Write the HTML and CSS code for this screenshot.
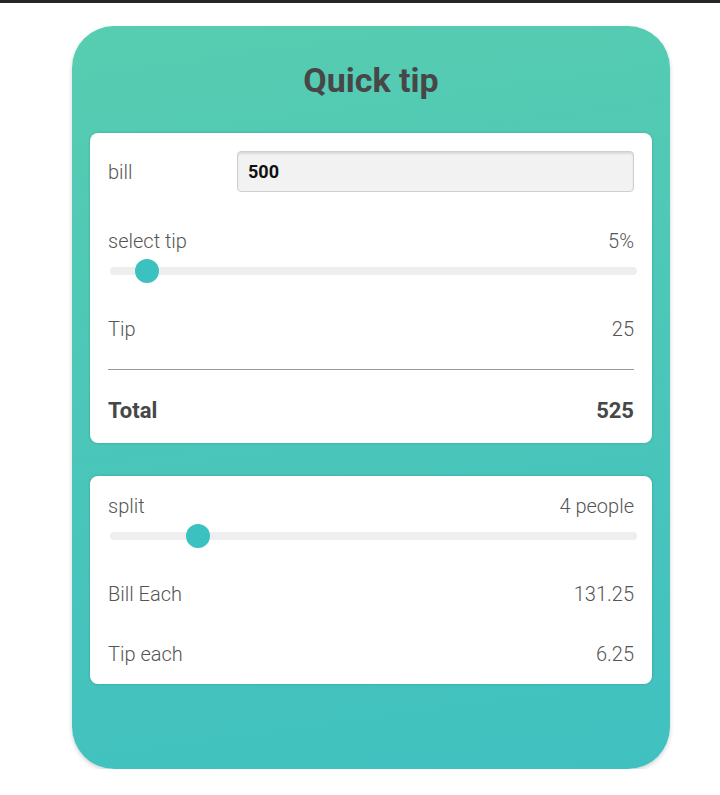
FILE: index.html
```html
<!DOCTYPE html>
<html>
<head>
<meta charset="utf-8">
<link rel="stylesheet" href="styles.css">
</head>
<body>
<div class="topbar"></div>
<main class="app">
  <h1 class="title">Quick tip</h1>
  <section class="panel panel-bill">
    <div class="bill-row">
      <label class="label bill-label">bill</label>
      <div class="bill-input">500</div>
    </div>
    <div class="row head-row">
      <span class="label">select tip</span>
      <span class="value">5%</span>
    </div>
    <div class="slider"><div class="thumb" style="left:25px"></div></div>
    <div class="row tip-row">
      <span class="label">Tip</span>
      <span class="value">25</span>
    </div>
    <hr class="divider">
    <div class="row total-row">
      <span>Total</span>
      <span>525</span>
    </div>
  </section>
  <section class="panel panel-split">
    <div class="row head-row split-head">
      <span class="label">split</span>
      <span class="value">4 people</span>
    </div>
    <div class="slider"><div class="thumb" style="left:76px"></div></div>
    <div class="row each-row">
      <span class="label">Bill Each</span>
      <span class="value">131.25</span>
    </div>
    <div class="row each-row each-row-2">
      <span class="label">Tip each</span>
      <span class="value">6.25</span>
    </div>
  </section>
</main>
</body>
</html>
```
FILE: styles.css
```css
html, body {
  margin: 0;
  padding: 0;
  background: #ffffff;
  font-family: Roboto, "Liberation Sans", sans-serif;
}
.topbar {
  height: 3px;
  background: #262626;
}
.app {
  box-sizing: border-box;
  width: 598px;
  height: 743px;
  margin: 23px 0 0 72px;
  padding: 0 18px;
  border-radius: 42px;
  background: linear-gradient(172deg, #57cdb0 0%, #4bc6b9 50%, #40c1c0 100%);
  box-shadow: 0 2px 4px rgba(0, 0, 0, 0.18);
  overflow: hidden;
}
.title {
  margin: 0;
  padding-top: 34px;
  height: 107px;
  box-sizing: border-box;
  text-align: center;
  font-size: 34px;
  line-height: 40px;
  font-weight: 700;
  color: #474747;
}
.panel {
  background: #ffffff;
  border-radius: 8px;
  padding: 18px 18px 20px;
  box-shadow: 0 0 3px rgba(0, 0, 0, 0.18);
  color: #555555;
}
.panel-split {
  margin-top: 33px;
  padding-top: 19px;
  padding-bottom: 19px;
}
.label, .value {
  font-size: 20px;
  font-weight: 300;
  color: #555555;
}
.bill-row {
  display: flex;
  align-items: center;
  height: 41px;
}
.bill-label {
  width: 129px;
  flex: none;
}
.bill-input {
  box-sizing: border-box;
  flex: 1;
  height: 41px;
  background: #f2f2f2;
  border: 1px solid #cfcfcf;
  border-radius: 4px;
  box-shadow: inset 0 2px 2px rgba(0, 0, 0, 0.1);
  padding: 0 10px;
  display: flex;
  align-items: center;
  font-size: 18px;
  font-weight: 700;
  color: #111111;
}
.row {
  display: flex;
  justify-content: space-between;
  align-items: center;
  height: 22px;
  line-height: 22px;
}
.head-row {
  margin-top: 38px;
}
.split-head {
  margin-top: 0;
}
.slider {
  position: relative;
  height: 8px;
  margin: 15px -3px 0 2px;
  border-radius: 4px;
  background: #eeeeee;
}
.thumb {
  position: absolute;
  top: -8px;
  width: 24px;
  height: 24px;
  border-radius: 50%;
  background: #3cc1c1;
}
.tip-row {
  margin-top: 43px;
}
.divider {
  margin: 29px 0 0;
  border: 0;
  height: 1px;
  background: #999999;
}
.total-row {
  margin-top: 29px;
  height: 24px;
  line-height: 24px;
  font-size: 22px;
  font-weight: 700;
  color: #474747;
}
.each-row {
  margin-top: 43px;
}
.each-row-2 {
  margin-top: 38px;
}
```
